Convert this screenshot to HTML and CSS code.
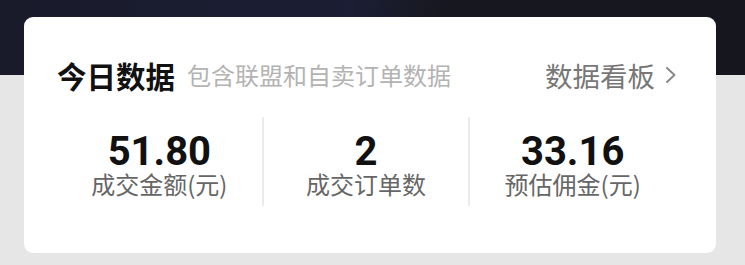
FILE: index.html
```html
<!DOCTYPE html>
<html lang="zh-CN">
<head>
<meta charset="utf-8">
<link rel="stylesheet" href="styles.css">
</head>
<body>
<div class="page">
  <div class="card">
    <div class="card-head">
      <div class="head-left">
        <span class="title">今日数据</span>
        <span class="subtitle">包含联盟和自卖订单数据</span>
      </div>
      <div class="head-right">
        <span class="link">数据看板</span>
        <svg class="chevron" width="12" height="18" viewBox="0 0 12 18"><polyline points="2,2 9.5,9 2,16" fill="none" stroke="#8a8a8a" stroke-width="2" stroke-linecap="round" stroke-linejoin="round"/></svg>
      </div>
    </div>
    <div class="stats">
      <div class="stat">
        <div class="num">51.80</div>
        <div class="label">成交金额(元)</div>
      </div>
      <div class="stat">
        <div class="num">2</div>
        <div class="label">成交订单数</div>
      </div>
      <div class="stat">
        <div class="num">33.16</div>
        <div class="label">预估佣金(元)</div>
      </div>
    </div>
  </div>
</div>
</body>
</html>
```
FILE: styles.css
```css
html, body {
  margin: 0;
  padding: 0;
}
body {
  font-family: "Noto Sans CJK SC", "Noto Sans", sans-serif;
  background: #e6e6e6;
}
.page {
  width: 745px;
  height: 265px;
  box-sizing: border-box;
  padding: 17px 29px 0 24px;
  background:
    linear-gradient(to bottom, transparent 75px, #e6e6e6 75px),
    linear-gradient(100deg, #191b2b 0%, #1b1e34 45%, #17181f 56%, #16171e 100%);
}
.card {
  background: #fff;
  border-radius: 9px;
  padding: 44px 39px 47px 33px;
}
.card-head {
  display: flex;
  justify-content: space-between;
  align-items: center;
  height: 28px;
}
.head-left {
  display: flex;
  align-items: center;
  gap: 12px;
}
.title {
  font-size: 29.5px;
  line-height: 28px;
  font-weight: 600;
  color: #111;
}
.subtitle {
  font-size: 24px;
  line-height: 28px;
  color: #b3b3b3;
}
.head-right {
  display: flex;
  align-items: center;
  gap: 10px;
}
.link {
  font-size: 27.5px;
  line-height: 28px;
  color: #777;
}
.chevron {
  display: block;
}
.stats {
  display: flex;
  margin-top: 28px;
  margin-right: 2px;
}
.stat {
  flex: 1;
  display: flex;
  flex-direction: column;
  align-items: center;
  padding: 15px 0 10px;
}
.stat + .stat {
  border-left: 2px solid #ebebeb;
}
.num {
  font-family: Roboto, "Liberation Sans", sans-serif;
  font-weight: 700;
  font-size: 40px;
  line-height: 40px;
  color: #111;
}
.label {
  font-size: 24px;
  line-height: 24px;
  color: #666;
}
```
